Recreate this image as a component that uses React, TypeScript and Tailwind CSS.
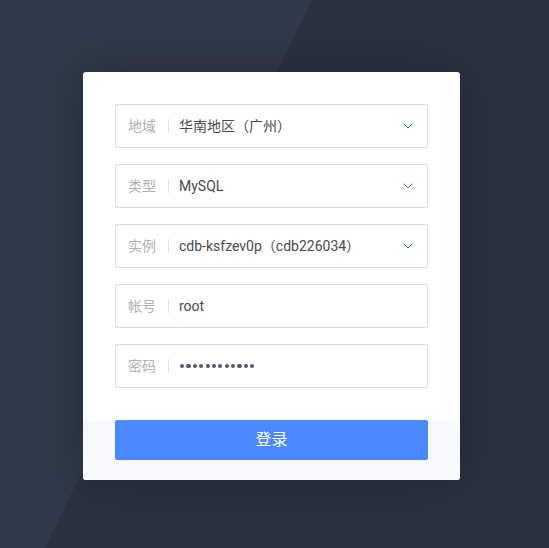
import type { ReactNode } from 'react'

const font = { fontFamily: 'Roboto, "Noto Sans CJK SC", sans-serif' }

function Chevron() {
  return (
    <svg width="10" height="6" viewBox="0 0 10 6" className="mr-[14px] flex-shrink-0">
      <path d="M0.6 0.6 L5 5 L9.4 0.6" fill="none" stroke="#2f7dff" strokeWidth="1" />
    </svg>
  )
}

function Field({ label, children, select }: { label: string; children: ReactNode; select?: boolean }) {
  return (
    <div className="flex items-center h-[44px] border border-[#dddddd] bg-white rounded-[1px]">
      <span className="pl-[12px] text-[14px] text-[#b0b0b0] w-[52px] flex-shrink-0">{label}</span>
      <span className="w-px h-[14px] bg-[#e2e2e2] flex-shrink-0" />
      <div className="flex-1 pl-[10px] text-[14px] text-[#4a4a4a]">{children}</div>
      {select && <Chevron />}
    </div>
  )
}

export default function App() {
  const dots = Array.from({ length: 12 })
  return (
    <div className="relative w-full h-[548px] overflow-hidden bg-[#2b3140]" style={font}>
      {/* lighter diagonal panel behind the card */}
      <svg className="absolute inset-0 w-full h-full" viewBox="0 0 549 548" preserveAspectRatio="none">
        <polygon points="0,0 312,0 45,548 0,548" fill="#313a4a" />
      </svg>

      <div className="relative pt-[72px] pl-[83px]">
        <div className="w-[377px] bg-white rounded-[3px] overflow-hidden shadow-[0_0_40px_rgba(20,24,34,0.45)]">
          <div className="flex flex-col gap-[16px] px-[32px] pt-[32px] pb-[32px]">
            <Field label="地域" select>华南地区（广州）</Field>
            <Field label="类型" select>MySQL</Field>
            <Field label="实例" select>cdb-ksfzev0p（cdb226034）</Field>
            <Field label="帐号">root</Field>
            <Field label="密码">
              <div className="flex gap-[2.2px] pl-[1px]">
                {dots.map((_, i) => (
                  <span key={i} className="w-[4.2px] h-[4.2px] rounded-full bg-[#535966]" />
                ))}
              </div>
            </Field>
          </div>
          <div className="bg-[#f8faff] px-[32px] pb-[20px]">
            <button className="w-full h-[40px] rounded-[2px] bg-[#4a88ff] text-white text-[16px]">登录</button>
          </div>
        </div>
      </div>
    </div>
  )
}
